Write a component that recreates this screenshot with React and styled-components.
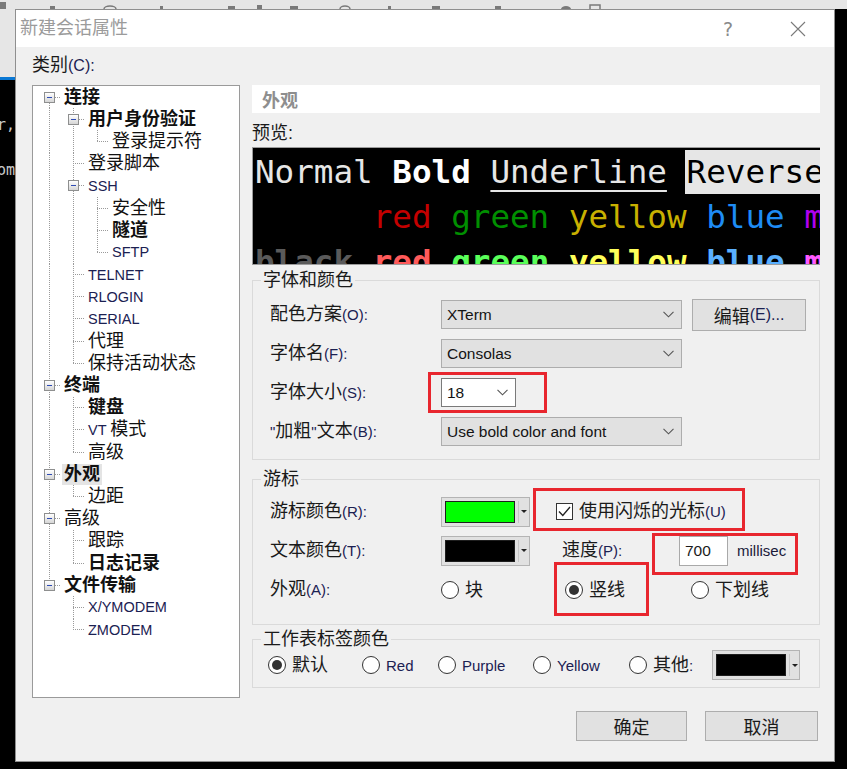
import React from 'react';
import styled, { createGlobalStyle } from 'styled-components';

const UI = '"Liberation Sans", "Noto Sans CJK SC", sans-serif';
const MONO = '"DejaVu Sans Mono", "Liberation Mono", monospace';

const GlobalStyle = createGlobalStyle`
  *, *::before, *::after { box-sizing: border-box; }
  html, body { margin: 0; padding: 0; background: #000; }
  body { font-family: ${UI}; color: #1a1a1a; }
`;

const Screen = styled.div`
  width: 847px;
  height: 769px;
  overflow: hidden;
  display: grid;
  grid-template-columns: 15px 820px 12px;
  grid-template-rows: 9px 753px 7px;
  background: #000;
`;

const TopStrip = styled.div`
  grid-column: 1 / -1;
  background: #e6e6e6;
  overflow: hidden;
  display: flex;
`;

const SideStrip = styled.div`
  grid-row: 2 / 4;
  background: linear-gradient(to bottom, #e6e6e6 0 68px, #0a78d4 68px 71px, #000 71px);
  display: flex;
  flex-direction: column;
  align-items: flex-end;
  overflow: hidden;
`;

const TermText = styled.div`
  font: 15px ${MONO};
  line-height: 22px;
  color: #c9c9c9;
  white-space: nowrap;
  margin-top: ${p => p.$mt}px;
`;

const Dialog = styled.div`
  grid-column: 2;
  grid-row: 2;
  border: 1px solid #8f8f8f;
  background: #f0f0f0;
  display: flex;
  flex-direction: column;
`;

const TitleBar = styled.div`
  height: 37px;
  flex: 0 0 37px;
  background: #fff;
  display: flex;
  align-items: center;
  padding-left: 4px;
`;

const Title = styled.div`
  flex: 1;
  font-size: 18px;
  line-height: 21px;
  color: #9b9b9b;
`;

const Help = styled.span`
  font: 19px "DejaVu Sans", sans-serif;
  color: #8a8a8a;
  margin-right: 57px;
`;

const CloseIcon = styled.svg`
  margin-right: 28px;
`;

const Body = styled.div`
  flex: 1;
  display: flex;
  flex-direction: column;
  padding: 7px 14px 0 16px;
`;

const CatLabel = styled.div`
  font-size: 18px;
  line-height: 22px;
  margin-bottom: 8px;
`;

const Main = styled.div`
  display: flex;
  gap: 12px;
  height: 613px;
`;

const TreeBox = styled.div`
  width: 208px;
  border: 1px solid #9a9a9a;
  background: #fff;
  padding-left: 4px;
`;

const TreeRow = styled.div`
  display: flex;
  height: 22.2px;
`;

const dotV = 'repeating-linear-gradient(to bottom, #9a9a9a 0 1px, transparent 1px 2px)';
const dotH = 'repeating-linear-gradient(to right, #9a9a9a 0 1px, transparent 1px 2px)';

const guideBg = ({ $up, $down, $right }) => {
  const imgs = [];
  const sizes = [];
  const pos = [];
  if ($up && $down) { imgs.push(dotV); sizes.push('1px 100%'); pos.push('12px 0'); }
  else if ($up) { imgs.push(dotV); sizes.push('1px 50%'); pos.push('12px 0'); }
  else if ($down) { imgs.push(dotV); sizes.push('1px 50%'); pos.push('12px 100%'); }
  if ($right) { imgs.push(dotH); sizes.push('12px 1px'); pos.push('12px 50%'); }
  if (!imgs.length) return 'background: none;';
  return `background-image: ${imgs.join(',')}; background-size: ${sizes.join(',')}; background-position: ${pos.join(',')}; background-repeat: no-repeat;`;
};

const Guide = styled.span`
  flex: 0 0 24px;
  display: flex;
  align-items: center;
  justify-content: center;
  ${guideBg}
`;

const Expander = styled.span`
  width: 11px;
  height: 11px;
  border: 1px solid #8e8f8f;
  background: linear-gradient(#ffffff, #d6d6d6);
  display: flex;
  align-items: center;
  justify-content: center;
  &::after {
    content: '';
    width: 5px;
    height: 1px;
    background: #2f4cb4;
  }
`;

const NodeLabel = styled.span`
  align-self: center;
  margin-left: ${p => (p.$sel ? 1 : 3)}px;
  padding: 0 ${p => (p.$sel ? 2 : 0)}px;
  font-size: 18px;
  line-height: 21px;
  font-weight: ${p => (p.$b ? 'bold' : 'normal')};
  background: ${p => (p.$sel ? '#e4e4e4' : 'transparent')};
  white-space: nowrap;
  color: #111;
`;

const Lat = styled.span`
  font-size: ${p => p.$size || 15}px;
  color: #1b2152;
`;

const RightCol = styled.div`
  width: 568px;
  display: flex;
  flex-direction: column;
`;

const PageHeader = styled.div`
  height: 28px;
  background: #fff;
  display: flex;
  align-items: center;
  padding-left: 10px;
  font-size: 18px;
  font-weight: bold;
  color: #8e8e8e;
`;

const SmallLabel = styled.div`
  margin-top: 9px;
  font-size: 18px;
  line-height: 22px;
`;

const Preview = styled.div`
  margin-top: 3px;
  height: 118px;
  border: 1px solid #9c9c9c;
  border-right: none;
  background: #000;
  overflow: hidden;
  padding: 2px 0 0 2px;
  font-family: ${MONO};
  font-size: 32.6px;
  white-space: pre;
  color: #e6e6e6;
`;

const PLine = styled.div`
  height: 45px;
  line-height: 45px;
  font-weight: ${p => (p.$bold ? 'bold' : 'normal')};
`;

const Bold = styled.span`
  font-weight: bold;
  color: #fff;
`;

const Under = styled.span`
  text-decoration: underline;
  text-decoration-thickness: 2px;
  text-underline-offset: 7px;
`;

const Rev = styled.span`
  display: inline-block;
  height: 44px;
  vertical-align: top;
  background: #e6e6e6;
  color: #000;
  padding-left: 2px;
  margin-left: -2px;
`;

const Ink = styled.span`
  color: ${p => p.$c};
`;

const Group = styled.fieldset`
  margin: ${p => p.$mt}px 0 0;
  padding: ${p => p.$pt}px 0 ${p => p.$pb}px;
  border: 1px solid #dadada;
  min-width: 0;
`;

const Legend = styled.legend`
  margin-left: 8px;
  padding: 0 2px;
  font-size: 18px;
  line-height: 20px;
`;

const FormGrid = styled.div`
  display: grid;
  grid-template-columns: ${p => p.$cols};
  grid-auto-rows: ${p => p.$row}px;
  align-items: center;
  padding-left: ${p => p.$pl}px;
`;

const FieldLabel = styled.span`
  font-size: 18px;
  line-height: 22px;
  white-space: nowrap;
`;

const Combo = styled.div`
  width: ${p => p.$w}px;
  height: 29px;
  border: 1px solid ${p => (p.$white ? '#7a7a7a' : '#adadad')};
  background: ${p => (p.$white ? '#fff' : '#e1e1e1')};
  display: flex;
  align-items: center;
  justify-content: space-between;
  padding: 0 7px 0 5px;
  font-size: 15.5px;
  color: #141414;
`;

const PushButton = styled.div`
  width: ${p => p.$w}px;
  height: ${p => p.$h}px;
  background: #e1e1e1;
  border: 1px solid #adadad;
  display: flex;
  align-items: center;
  justify-content: center;
  font-size: 18px;
  white-space: nowrap;
`;

const ColorBtn = styled.div`
  width: ${p => p.$w}px;
  height: 30px;
  background: #e1e1e1;
  border: 1px solid #b4b4b4;
  display: flex;
  align-items: center;
  padding: 0 0 0 3px;
`;

const Swatch = styled.div`
  width: 70px;
  height: 22px;
  background: ${p => p.$c};
  border: 1px solid #1e1e1e;
`;

const DropPart = styled.div`
  flex: 1;
  align-self: stretch;
  margin: 3px 0 3px 3px;
  border-left: 1px solid #c6c6c6;
  display: flex;
  align-items: center;
  justify-content: center;
  &::after {
    content: '';
    border-left: 3px solid transparent;
    border-right: 3px solid transparent;
    border-top: 3px solid #222;
  }
`;

const Option = styled.span`
  display: inline-flex;
  align-items: center;
  gap: ${p => p.$gap || 6}px;
  margin-left: ${p => p.$ml || 0}px;
  font-size: 18px;
  line-height: 22px;
  white-space: nowrap;
  justify-self: start;
`;

const RadioDot = styled.span`
  width: 18px;
  height: 18px;
  border-radius: 50%;
  border: 1px solid #333;
  background: #fff;
  display: flex;
  align-items: center;
  justify-content: center;
  &::after {
    content: '';
    width: 10px;
    height: 10px;
    border-radius: 50%;
    background: ${p => (p.$on ? '#333' : 'transparent')};
  }
`;

const CheckBox = styled.span`
  width: 17px;
  height: 17px;
  border: 1px solid #333;
  background: #fff;
  display: flex;
  align-items: center;
  justify-content: center;
`;

const SpeedInput = styled.div`
  width: 49px;
  height: 30px;
  background: #fff;
  border: 1px solid #a9a9a9;
  display: flex;
  align-items: center;
  padding-left: 5px;
  font-size: 15.5px;
`;

const Marked = styled.span`
  position: relative;
  display: inline-flex;
  align-items: center;
  justify-self: start;
  margin-left: ${p => p.$ml || 0}px;
  &::after {
    content: '';
    position: absolute;
    top: ${p => p.$box[0]}px;
    right: ${p => p.$box[1]}px;
    bottom: ${p => p.$box[2]}px;
    left: ${p => p.$box[3]}px;
    border: 3px solid #e8262e;
    pointer-events: none;
  }
`;

const Footer = styled.div`
  display: flex;
  justify-content: flex-end;
  gap: 18px;
  margin-top: 13px;
  padding-right: 2px;
`;

const TREE = [
  { t: '连接', lv: 0, b: 1, exp: 1 },
  { t: '用户身份验证', lv: 1, b: 1, exp: 1 },
  { t: '登录提示符', lv: 2 },
  { t: '登录脚本', lv: 1 },
  { t: 'SSH', lv: 1, exp: 1 },
  { t: '安全性', lv: 2 },
  { t: '隧道', lv: 2, b: 1 },
  { t: 'SFTP', lv: 2 },
  { t: 'TELNET', lv: 1 },
  { t: 'RLOGIN', lv: 1 },
  { t: 'SERIAL', lv: 1 },
  { t: '代理', lv: 1 },
  { t: '保持活动状态', lv: 1 },
  { t: '终端', lv: 0, b: 1, exp: 1 },
  { t: '键盘', lv: 1, b: 1 },
  { t: 'VT 模式', lv: 1 },
  { t: '高级', lv: 1 },
  { t: '外观', lv: 0, b: 1, exp: 1, sel: 1 },
  { t: '边距', lv: 1 },
  { t: '高级', lv: 0, exp: 1 },
  { t: '跟踪', lv: 1 },
  { t: '日志记录', lv: 1, b: 1 },
  { t: '文件传输', lv: 0, b: 1, exp: 1 },
  { t: 'X/YMODEM', lv: 1 },
  { t: 'ZMODEM', lv: 1 },
];

// is there a later row at depth d before the branch closes
const hasNextAt = (i, d) => {
  for (let j = i + 1; j < TREE.length; j++) {
    if (TREE[j].lv < d) return false;
    if (TREE[j].lv === d) return true;
  }
  return false;
};

// ascii runs get the smaller latin font
const Mixed = ({ text, size }) =>
  text
    .split(/([\x20-\x7E]+)/)
    .filter(Boolean)
    .map((s, i) =>
      /^[\x20-\x7E]+$/.test(s) ? <Lat key={i} $size={size}>{s}</Lat> : <React.Fragment key={i}>{s}</React.Fragment>
    );

const Chevron = () => (
  <svg width="11" height="7" viewBox="0 0 11 7">
    <polyline points="0.5,0.8 5.5,5.8 10.5,0.8" fill="none" stroke="#555" strokeWidth="1.1" />
  </svg>
);

const Radio = ({ on, label, ml, size }) => (
  <Option $ml={ml}>
    <RadioDot $on={on} />
    <span><Mixed text={label} size={size || 15} /></span>
  </Option>
);

const Tree = () => (
  <TreeBox>
    {TREE.map((n, i) => (
      <TreeRow key={i}>
        {Array.from({ length: n.lv }).map((_, d) => (
          <Guide key={d} $up={hasNextAt(i, d)} $down={hasNextAt(i, d)} />
        ))}
        <Guide $up={i > 0} $down={hasNextAt(i, n.lv)} $right>
          {n.exp ? <Expander /> : null}
        </Guide>
        <NodeLabel $b={n.b} $sel={n.sel}>
          <Mixed text={n.t} size={14.5} />
        </NodeLabel>
      </TreeRow>
    ))}
  </TreeBox>
);

const ToolbarBits = () => (
  <svg width="847" height="9" viewBox="0 0 847 9">
    <g fill="#7a7a7a">
      <rect x="0" y="2" width="6" height="7" />
      <rect x="50" y="6" width="5" height="3" />
      <ellipse cx="110" cy="9" rx="6" ry="3" fill="none" stroke="#7a7a7a" strokeWidth="1.5" />
      <rect x="160" y="6" width="3" height="3" />
      <rect x="228" y="6" width="7" height="3" />
      <rect x="257" y="5" width="5" height="4" />
      <rect x="290" y="6" width="8" height="3" />
      <ellipse cx="345" cy="9" rx="5" ry="3" fill="none" stroke="#7a7a7a" strokeWidth="1.5" />
      <rect x="388" y="6" width="3" height="3" />
      <rect x="432" y="6" width="8" height="3" />
      <rect x="495" y="6" width="6" height="3" />
      <ellipse cx="566" cy="9" rx="5" ry="3" />
      <rect x="590" y="5" width="10" height="5" fill="none" stroke="#7a7a7a" strokeWidth="1.5" />
    </g>
  </svg>
);

const App = () => (
  <>
    <GlobalStyle />
    <Screen>
      <TopStrip>
        <ToolbarBits />
      </TopStrip>
      <SideStrip>
        <TermText $mt={105}>user,</TermText>
        <TermText $mt={23}>.com</TermText>
      </SideStrip>
      <Dialog>
        <TitleBar>
          <Title>新建会话属性</Title>
          <Help>?</Help>
          <CloseIcon width="16" height="16" viewBox="0 0 16 16">
            <path d="M1 1 L15 15 M15 1 L1 15" stroke="#7a7a7a" strokeWidth="1.1" fill="none" />
          </CloseIcon>
        </TitleBar>
        <Body>
          <CatLabel>
            <Mixed text="类别(C):" size={16} />
          </CatLabel>
          <Main>
            <Tree />
            <RightCol>
              <PageHeader>外观</PageHeader>
              <SmallLabel>预览:</SmallLabel>
              <Preview>
                <PLine>
                  Normal <Bold>Bold</Bold> <Under>Underline</Under> <Rev>Reverse</Rev>
                </PLine>
                <PLine>
                  {'      '}
                  <Ink $c="#c40000">red</Ink> <Ink $c="#008f00">green</Ink> <Ink $c="#c8b000">yellow</Ink>{' '}
                  <Ink $c="#1e8cf5">blue</Ink> <Ink $c="#b000f0">magenta</Ink>
                </PLine>
                <PLine $bold>
                  <Ink $c="#5a5a5a">black</Ink> <Ink $c="#ff5a5a">red</Ink> <Ink $c="#5aff5a">green</Ink>{' '}
                  <Ink $c="#ffff5a">yellow</Ink> <Ink $c="#5ab0ff">blue</Ink> <Ink $c="#ff5aff">magenta</Ink>
                </PLine>
              </Preview>

              <Group $mt={5} $pt={5} $pb={8}>
                <Legend>字体和颜色</Legend>
                <FormGrid $cols="171px 251px 114px" $row={39} $pl={17}>
                  <FieldLabel><Mixed text="配色方案(O):" /></FieldLabel>
                  <Combo $w={241}>XTerm<Chevron /></Combo>
                  <PushButton $w={114} $h={32}><Mixed text="编辑(E)..." size={16} /></PushButton>

                  <FieldLabel><Mixed text="字体名(F):" /></FieldLabel>
                  <Combo $w={241}>Consolas<Chevron /></Combo>
                  <span />

                  <FieldLabel><Mixed text="字体大小(S):" /></FieldLabel>
                  <Marked $box={[-6, -31, -6, -13]}>
                    <Combo $w={75} $white>18<Chevron /></Combo>
                  </Marked>
                  <span />

                  <FieldLabel><Mixed text={'"加粗"文本(B):'} /></FieldLabel>
                  <Combo $w={241}>Use bold color and font<Chevron /></Combo>
                  <span />
                </FormGrid>
              </Group>

              <Group $mt={9} $pt={3} $pb={15}>
                <Legend>游标</Legend>
                <FormGrid $cols="171px 115px 123px auto" $row={39} $pl={17}>
                  <FieldLabel><Mixed text="游标颜色(R):" /></FieldLabel>
                  <ColorBtn $w={89}><Swatch $c="#00ff00" /><DropPart /></ColorBtn>
                  <Marked $box={[-12, -19, -8, -23]} style={{ gridColumn: '3 / 5' }}>
                    <Option $gap={6}>
                      <CheckBox>
                        <svg width="13" height="11" viewBox="0 0 13 11">
                          <polyline points="1,5.5 4.8,9.5 12,1" fill="none" stroke="#222" strokeWidth="1.4" />
                        </svg>
                      </CheckBox>
                      <span><Mixed text="使用闪烁的光标(U)" /></span>
                    </Option>
                  </Marked>

                  <FieldLabel><Mixed text="文本颜色(T):" /></FieldLabel>
                  <ColorBtn $w={89}><Swatch $c="#000" /><DropPart /></ColorBtn>
                  <FieldLabel style={{ marginLeft: 6 }}><Mixed text="速度(P):" /></FieldLabel>
                  <Marked $box={[-3, -12, -9, -27]}>
                    <SpeedInput>700</SpeedInput>
                    <Lat $size={15} style={{ marginLeft: 9, color: '#1a1a3a' }}>millisec</Lat>
                  </Marked>

                  <FieldLabel><Mixed text="外观(A):" /></FieldLabel>
                  <Radio label="块" />
                  <Marked $ml={9} $box={[-17, -24, -15, -11]}>
                    <Radio on label="竖线" />
                  </Marked>
                  <Radio ml={12} label="下划线" />
                </FormGrid>
              </Group>

              <Group $mt={4} $pt={0} $pb={6}>
                <Legend>工作表标签颜色</Legend>
                <FormGrid $cols="94px 76px 95px 96px 83px auto" $row={32} $pl={15}>
                  <Radio on label="默认" />
                  <Radio label="Red" />
                  <Radio label="Purple" />
                  <Radio label="Yellow" />
                  <Radio label="其他:" />
                  <ColorBtn $w={88}><Swatch $c="#000" /><DropPart /></ColorBtn>
                </FormGrid>
              </Group>
            </RightCol>
          </Main>
          <Footer>
            <PushButton $w={111} $h={30}>确定</PushButton>
            <PushButton $w={113} $h={30}>取消</PushButton>
          </Footer>
        </Body>
      </Dialog>
    </Screen>
  </>
);

export default App;
